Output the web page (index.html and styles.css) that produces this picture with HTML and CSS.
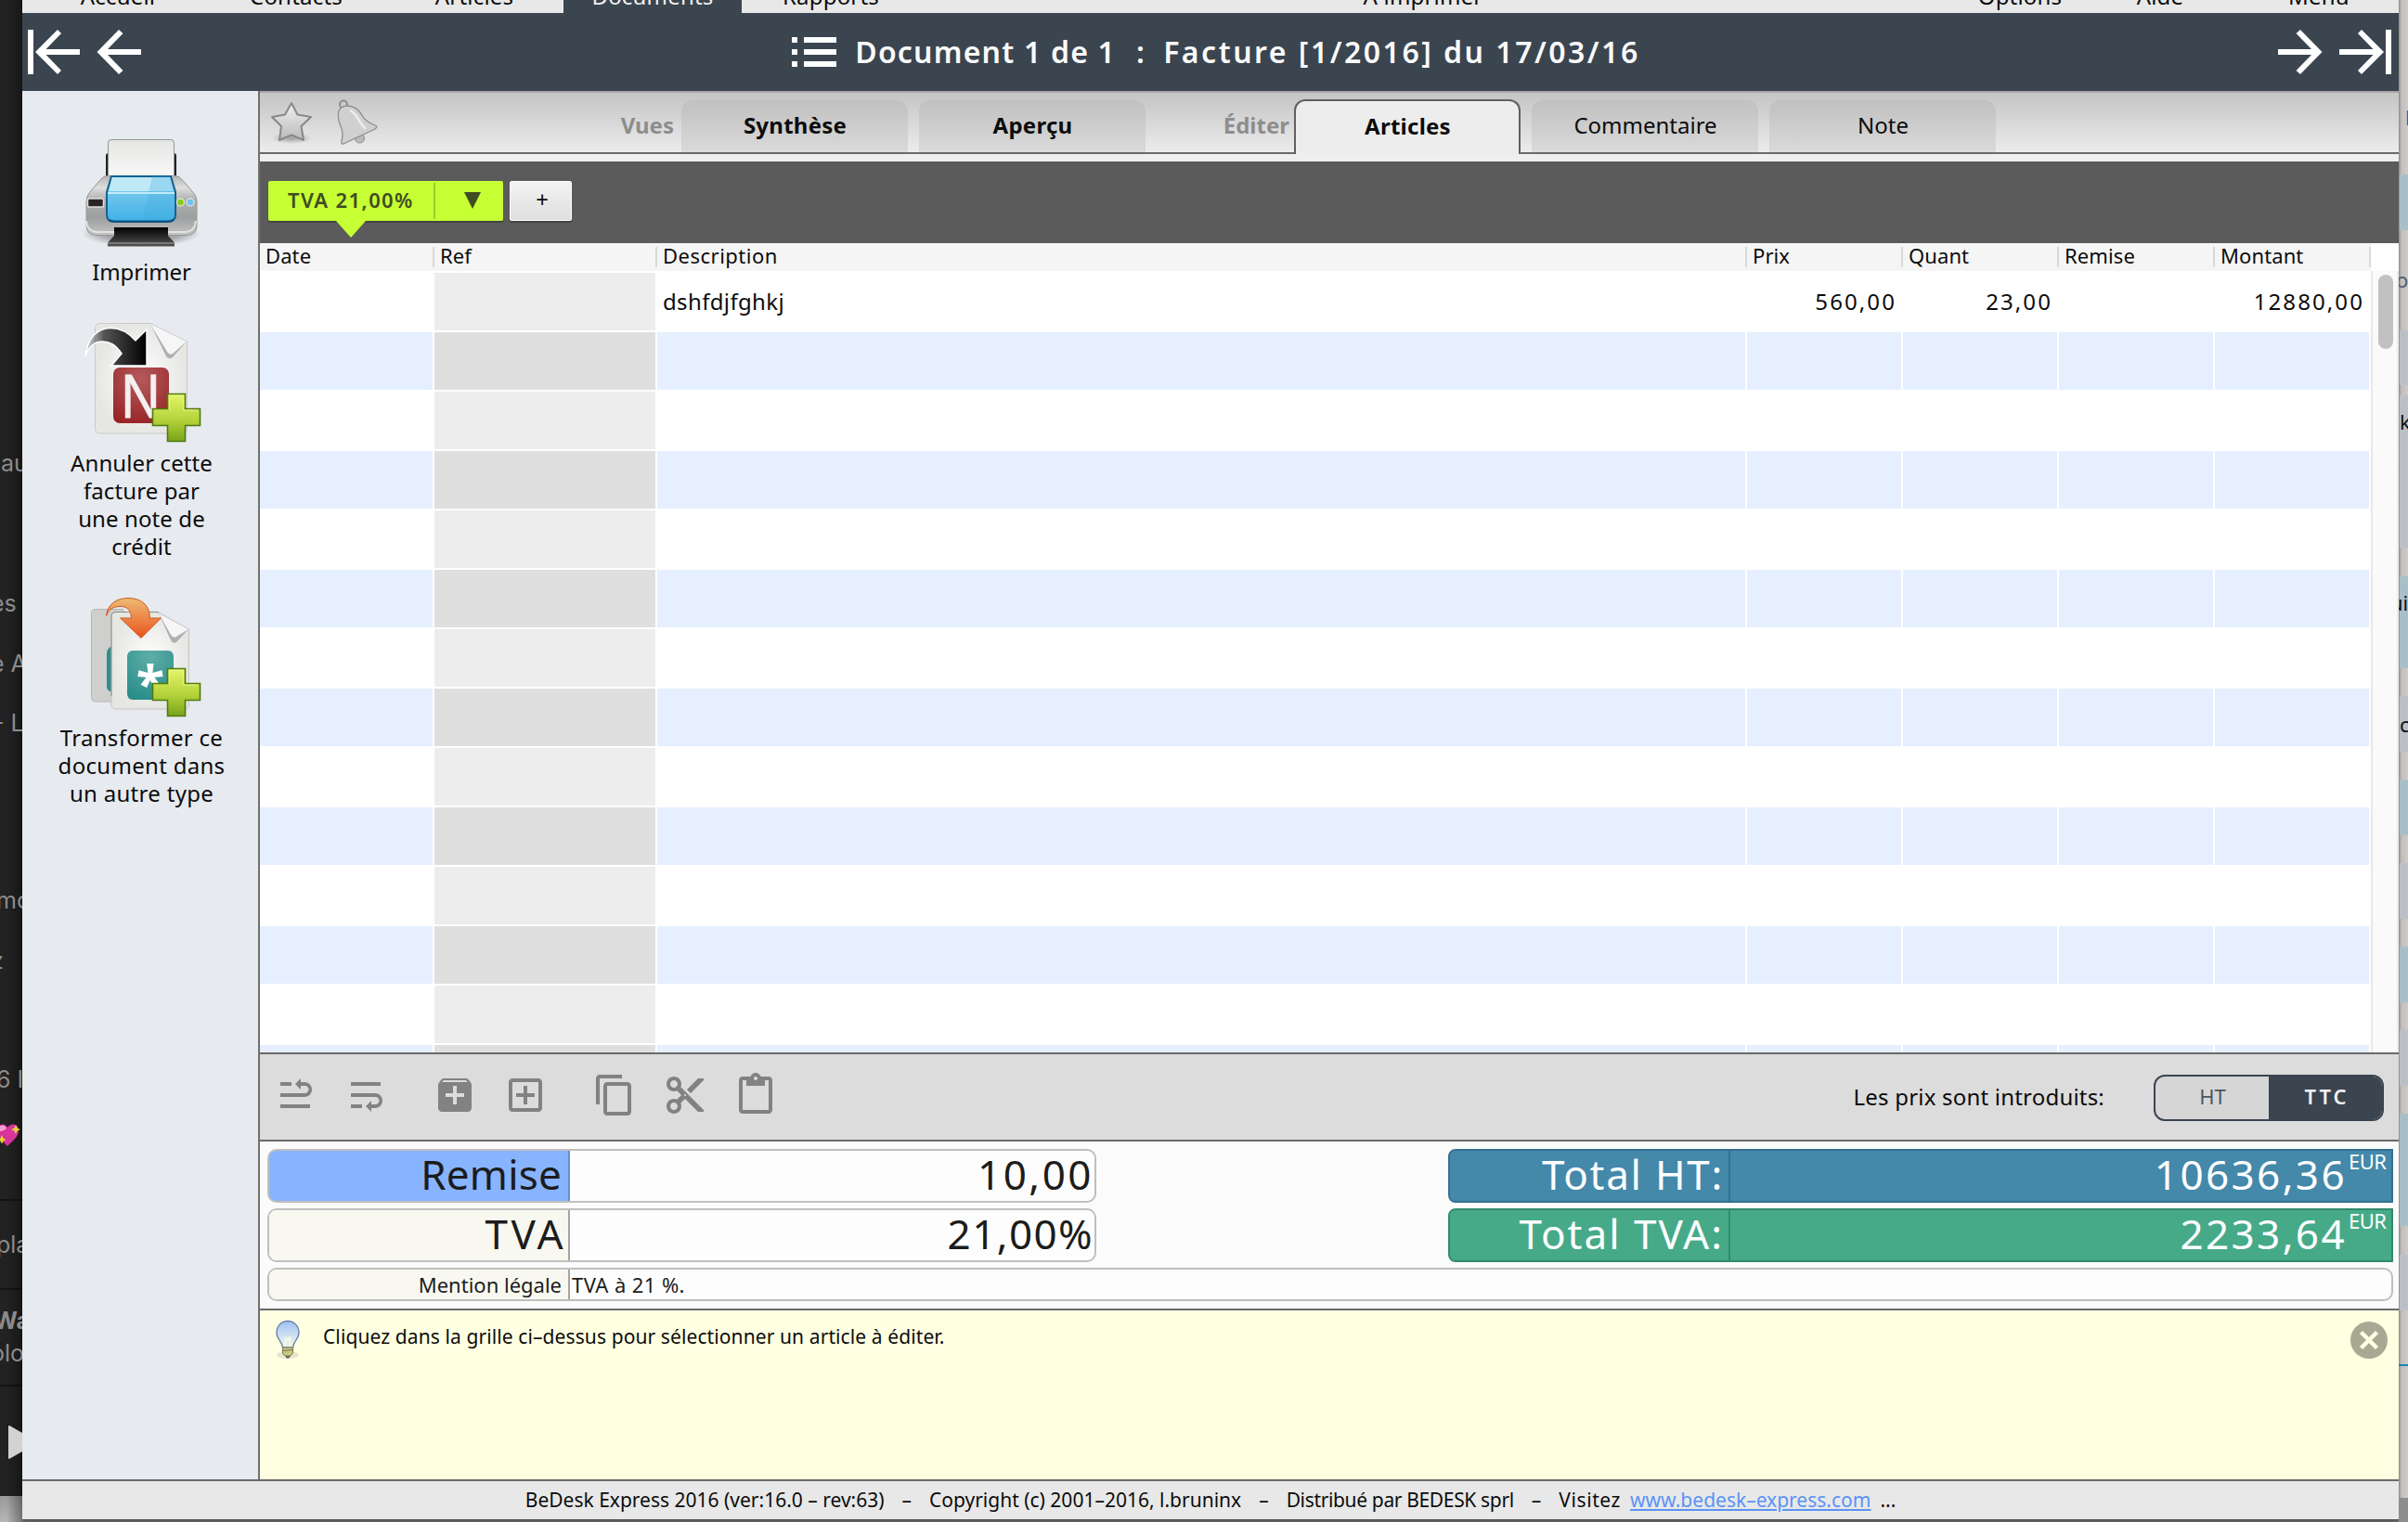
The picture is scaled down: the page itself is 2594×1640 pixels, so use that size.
FILE: index.html
```html
<!DOCTYPE html>
<html lang="fr">
<head>
<meta charset="utf-8">
<title>BeDesk Express 2016</title>
<link rel="stylesheet" href="styles.css">
</head>
<body>
<div class="desktop">
  <aside class="player">
    <span class="frag" style="top:482px">au</span>
    <span class="frag frag-in" style="top:633px">es</span>
    <span class="frag frag-in" style="top:698px">e A</span>
    <span class="frag frag-in2" style="top:762px">- L</span>
    <span class="frag frag-bold" style="top:953px">mo</span>
    <span class="frag frag-z" style="top:1018px">z</span>
    <span class="frag frag-bold" style="top:1146px">6 I</span>
    <svg class="heart" viewBox="0 0 24 28"><path d="M-4 8C-2 0 6 0 8 5C11 0 20 0 20 8C20 15 13 20 8 25C3 20-4 15-4 8Z" fill="#d6359a"/><path d="M-3 6C0 1 6 2 7 6C4 9 0 9-3 9Z" fill="#f2a0cf"/><path d="M17 2l1.500 3.500 3.500 1.500-3.500 1.500-1.500 3.500-1.500-3.500-3.500-1.500 3.500-1.500zM2 13l1.500 3.500 3 1.500-3 1.500-1.500 3-1.500-3-3-1.500 3-1.500z" fill="#e6d62c"/></svg>
    <span class="frag frag-bold" style="top:1324px">pla</span>
    <span class="frag frag-bold heavy" style="top:1406px">Wa</span>
    <span class="frag frag-in" style="top:1441px">olo</span>
    <svg class="play" viewBox="0 0 15 36"><path d="M1 0L15 8V28L1 36Q0 36 0 35V1Q0 0 1 0Z" fill="#d2d2d2"/></svg>
  </aside>

  <div class="window">
    <nav class="menu">
      <span class="item">Accueil</span>
      <span class="item">Contacts</span>
      <span class="item">Articles</span>
      <span class="item on">Documents</span>
      <span class="item">Rapports</span>
      <span class="item print">À imprimer</span>
      <span class="item options">Options</span>
      <span class="item help">Aide</span>
      <span class="item more">Menu</span>
    </nav>

    <header class="title">
      <svg class="nav" width="122" height="48" viewBox="0 0 122 48"><path d="M0 0h6v48H0zM8 24L32 0l4 4-16.500 17H56v6H19.500L36 44l-4 4zM74.500 24L98 0l4.500 4L86 21h36v6H86l16.500 17L98 48z"/></svg>
      <div class="heading">
        <svg width="48" height="32" viewBox="0 0 48 32"><path d="M0 0h6v6H0zM13 0h35v6H13zM0 13h6v6H0zM13 13h35v6H13zM0 26h6v6H0zM13 26h35v6H13z"/></svg>
        <h1><span>Document 1 de 1</span><span>:</span><span class="wide">Facture [1/2016] du 17/03/16</span></h1>
      </div>
      <svg class="nav next" width="122" height="48" viewBox="0 0 122 48"><path d="M122 0h-6v48h6zM114 24L90 0l-4 4 16.500 17H66v6h36.500L86 44l4 4zM47.500 24L24 0l-4.500 4L36 21H0v6h36L19.500 44 24 48z"/></svg>
    </header>

    <div class="body">
      <aside class="side">
        <div class="action printer">
          <svg width="140" height="132" viewBox="-3 0 140 132">
            <defs>
              <linearGradient id="pb" x1="0" y1="0" x2="0" y2="1"><stop offset="0" stop-color="#b4b4b4"/><stop offset=".2" stop-color="#dedede"/><stop offset=".4" stop-color="#b0b0b0"/><stop offset=".7" stop-color="#9d9fa0"/><stop offset="1" stop-color="#c4c4c4"/></linearGradient>
              <linearGradient id="pg" x1="0" y1="0" x2="0" y2="1"><stop offset="0" stop-color="#8fd3ef"/><stop offset="1" stop-color="#3fb0e6"/></linearGradient>
              <linearGradient id="pt" x1="0" y1="0" x2="0" y2="1"><stop offset="0" stop-color="#000"/><stop offset="1" stop-color="#555"/></linearGradient>
              <linearGradient id="pp" x1="0" y1="0" x2="0" y2="1"><stop offset="0" stop-color="#e4e4e2"/><stop offset="1" stop-color="#fafafa"/></linearGradient>
              <radialGradient id="ps"><stop offset=".6" stop-color="#000" stop-opacity=".3"/><stop offset="1" stop-color="#000" stop-opacity="0"/></radialGradient>
            </defs>
            <ellipse cx="68" cy="112" rx="64" ry="14" fill="url(#ps)"/>
            <path d="M30 50V28q0-3 3-3h70q3 0 3 3v22z" fill="#222"/>
            <path d="M32.500 52V14q0-3.500 3.500-3.500h64q3.500 0 3.500 3.500v38z" fill="url(#pp)" stroke="#949494"/>
            <path d="M31 49.500h74q4 0 8 5l12 14q3 4 3 8v26q0 11-11 11H20q-11 0-11-11V77q0-5 3-9l11-13q4-5.500 8-5.500z" fill="url(#pb)" stroke="#969696"/>
            <path d="M9 98q1 12 12 12h94q11 0 12-12" fill="none" stroke="#e2e2e2" stroke-width="2"/>
            <path d="M36 50h64l5 17v24q0 8-8 8H39q-8 0-8-8V67z" fill="url(#pg)" stroke="#14618f" stroke-width="2"/>
            <path d="M37 51h62l4 15H33z" fill="#bfe9f7"/>
            <path d="M80 50h19l5 17v25q0 3-4 4H70z" fill="#38a9e0" opacity=".28"/>
            <path d="M32 68h72" stroke="#c3ebf9" stroke-width="2"/>
            <path d="M34 97q2 1.500 6 1.500h56q4 0 7-2" fill="none" stroke="#0d5280" stroke-width="2"/>
            <rect x="10.500" y="74" width="17" height="9" rx="1.500" fill="#2c2424" stroke="#e0e0e0" stroke-width="1.500"/>
            <circle cx="110.500" cy="78" r="4" fill="#86cf12" stroke="#dcdcdc" stroke-width="1.500"/>
            <circle cx="121" cy="78" r="4" fill="#6cc4ee" stroke="#dcdcdc" stroke-width="1.500"/>
            <path d="M39 105h58v9l7 7.500v4H32v-4l7-7.500z" fill="url(#pt)"/>
            <path d="M32 122h72" stroke="#8a8a8a" stroke-width="1.500"/>
          </svg>
          <p>Imprimer</p>
        </div>
        <div class="action credit">
          <svg width="140" height="140" viewBox="81 340 140 140">
            <defs>
              <radialGradient id="paper"><stop offset="0" stop-color="#fff"/><stop offset="1" stop-color="#e6e6e3"/></radialGradient>
              <radialGradient id="red" cx=".5" cy=".2" r=".9"><stop offset="0" stop-color="#b45a5c"/><stop offset="1" stop-color="#962022"/></radialGradient>
              <linearGradient id="ink"><stop offset="0" stop-color="#777" stop-opacity=".2"/><stop offset=".3" stop-color="#555"/><stop offset="1" stop-color="#000"/></linearGradient>
              <linearGradient id="green" x1="0" y1="0" x2="0" y2="1"><stop offset="0" stop-color="#e4f56a"/><stop offset=".55" stop-color="#b5d33a"/><stop offset="1" stop-color="#79a31c"/></linearGradient>
            </defs>
            <path d="M108 348.500H162L201.500 368V462q0 5-5 5H108q-5.500 0-5.500-5.500V354q0-5.500 5.500-5.500z" fill="url(#paper)" stroke="#cacaca"/>
            <path d="M162 349L201 368 186 385q-4 3-7-1z" fill="#b0b0b0"/>
            <path d="M162 349L201 368 186 381q-3 2-6-2z" fill="#f6f6f6"/>
            <rect x="122" y="396" width="60" height="60" rx="7" fill="url(#red)"/>
            <text class="letter" transform="translate(130.500 449.500) scale(.88 1)">N</text>
            <path d="M92 384C94 364 105 353.500 119 353.500C131 353.500 139 359 146 367L158 355V394H120L131 381C124 371 118 368 110 368C102 368 95 374 92 384z" fill="url(#ink)" stroke="#fff" stroke-width="1.500"/>
            <path d="M180.500 424.500h19v16h16v18h-16v17h-19v-17h-16v-18h16z" fill="url(#green)" stroke="#4f7a0e" stroke-width="1.600"/>
            <path d="M182.500 442V426.500h15V442H213" fill="none" stroke="#eef79a" stroke-opacity=".7"/>
          </svg>
          <p>Annuler cette<br>facture par<br>une note de<br>crédit</p>
        </div>
        <div class="action convert">
          <svg width="140" height="140" viewBox="81 636 140 140">
            <defs>
              <radialGradient id="teal" cx=".5" cy=".1" r=".9"><stop offset="0" stop-color="#5fada8"/><stop offset="1" stop-color="#2a8e8a"/></radialGradient>
              <linearGradient id="orange" x1="0" y1="0" x2="0" y2="1"><stop offset="0" stop-color="#eebb74"/><stop offset="1" stop-color="#e9521c"/></linearGradient>
            </defs>
            <path d="M103 656.500h30v99.500h-30q-4.500 0-4.500-4.500v-91q0-4 4.500-4z" fill="#cfcfcd" stroke="#b5b5b5"/>
            <path d="M122 696q-7 2-7 8v36q0 5 7 6z" fill="#2c8f8b"/>
            <path d="M125 659.500H170L203.500 678V759q0 5-5 5H125q-5 0-5-5v-94q0-5.500 5-5.500z" fill="url(#paper)" stroke="#c2c2c2"/>
            <path d="M120 750v-86q0-4.500 5-4.500h46" fill="none" stroke="#8b8b8b"/>
            <path d="M171 661L203 678 191 691q-4 4-7-1z" fill="#b0b0b0"/>
            <path d="M171 661L203 678 190 686q-3 2-6-2z" fill="#f6f6f6"/>
            <rect x="137" y="701" width="50" height="53" rx="6" fill="url(#teal)"/>
            <text class="star" x="162" y="757" text-anchor="middle">*</text>
            <path transform="translate(0 -5.500)" d="M114.500 669C116 656 126 650 138 650C152 650 161 657 161.500 671.500H173.500L152 693 129.500 671.500H141.500C141 663 137 659 130 659C122 659 117 662 114.500 669z" fill="url(#orange)" stroke="#cc5a20"/>
            <path d="M180.500 720.500h19v16h16v18h-16v17h-19v-17h-16v-18h16z" fill="url(#green)" stroke="#4f7a0e" stroke-width="1.600"/>
            <path d="M182.500 738V722.500h15V738H213" fill="none" stroke="#eef79a" stroke-opacity=".7"/>
          </svg>
          <p>Transformer ce<br>document dans<br>un autre type</p>
        </div>
      </aside>

      <main class="main">
        <div class="tabs">
          <svg class="marks" width="130" height="64" viewBox="0 0 130 64">
            <defs>
              <linearGradient id="sg" x1="0" y1="0" x2="0" y2="1"><stop offset="0" stop-color="#f0f0f0"/><stop offset="1" stop-color="#bababa"/></linearGradient>
              <radialGradient id="ss"><stop offset="0" stop-color="#000" stop-opacity=".3"/><stop offset="1" stop-color="#000" stop-opacity="0"/></radialGradient>
            </defs>
            <ellipse cx="30" cy="49" rx="22" ry="6" fill="url(#ss)"/>
            <path d="M30 11L36.500 23.500 51 26 40.500 36 43 51 30 45.500 17 51 19 36 9 26 23 23.500z" fill="url(#sg)" stroke="#888" stroke-width="2" stroke-linejoin="round"/>
            <circle cx="103.500" cy="49" r="5" fill="#bbb" stroke="#8a8a8a"/>
            <circle cx="86" cy="12.500" r="4" fill="none" stroke="#8d8d8d" stroke-width="2"/>
            <path d="M83 16.500C88 12 98 14 103 20C108 27 109 31 121 35.500C123 37 120 39 118 40L88 54C85 56 83 55 84 52C87 43 83 37 81 30C79.500 23 80 19 83 16.500z" fill="#d0d0d0" stroke="#8d8d8d" stroke-width="1.300"/>
            <path d="M93 19C102 23 101 31 110 39" fill="none" stroke="#ececec" stroke-width="2.500"/>
          </svg>
          <span class="group views">Vues</span>
          <span class="tab strong">Synthèse</span>
          <span class="tab strong">Aperçu</span>
          <span class="group edit">Éditer</span>
          <span class="tab strong active">Articles</span>
          <span class="tab">Commentaire</span>
          <span class="tab">Note</span>
        </div>

        <div class="vatbar">
          <div class="vat"><span class="rate">TVA 21,00%</span><span class="drop"><i></i></span></div>
          <div class="add">+</div>
        </div>

        <div class="table">
          <div class="head cols">
            <span>Date</span><span>Ref</span><span>Description</span><span>Prix</span><span>Quant</span><span>Remise</span><span>Montant</span>
          </div>
          <div class="grid">
            <div class="rows">
              <div class="row cols"><i></i><i></i><span>dshfdjfghkj</span><b>560,00</b><b>23,00</b><i></i><b>12880,00</b></div>
              <div class="row cols"><i></i><i></i><i></i><i></i><i></i><i></i><i></i></div>
              <div class="row cols"><i></i><i></i><i></i><i></i><i></i><i></i><i></i></div>
              <div class="row cols"><i></i><i></i><i></i><i></i><i></i><i></i><i></i></div>
              <div class="row cols"><i></i><i></i><i></i><i></i><i></i><i></i><i></i></div>
              <div class="row cols"><i></i><i></i><i></i><i></i><i></i><i></i><i></i></div>
              <div class="row cols"><i></i><i></i><i></i><i></i><i></i><i></i><i></i></div>
              <div class="row cols"><i></i><i></i><i></i><i></i><i></i><i></i><i></i></div>
              <div class="row cols"><i></i><i></i><i></i><i></i><i></i><i></i><i></i></div>
              <div class="row cols"><i></i><i></i><i></i><i></i><i></i><i></i><i></i></div>
              <div class="row cols"><i></i><i></i><i></i><i></i><i></i><i></i><i></i></div>
              <div class="row cols"><i></i><i></i><i></i><i></i><i></i><i></i><i></i></div>
              <div class="row cols"><i></i><i></i><i></i><i></i><i></i><i></i><i></i></div>
              <div class="row cols"><i></i><i></i><i></i><i></i><i></i><i></i><i></i></div>
            </div>
            <div class="scroll"><div class="thumb"></div></div>
          </div>
        </div>

        <div class="tools">
          <svg viewBox="0 0 24 24"><path transform="matrix(1 0 0 -1 0 24)" d="M4 19h6v-2H4v2zM20 5H4v2h16V5zm-3 6H4v2h13.250c1.100 0 2 .9 2 2s-.9 2-2 2H15v-2l-3 3 3 3v-2h2c2.210 0 4-1.790 4-4s-1.790-4-4-4z"/></svg>
          <svg viewBox="0 0 24 24"><path d="M4 19h6v-2H4v2zM20 5H4v2h16V5zm-3 6H4v2h13.250c1.100 0 2 .9 2 2s-.9 2-2 2H15v-2l-3 3 3 3v-2h2c2.210 0 4-1.790 4-4s-1.790-4-4-4z"/></svg>
          <svg class="apart" viewBox="0 0 24 24"><path fill-rule="evenodd" d="M20.550 5.220l-1.390-1.680C18.880 3.210 18.470 3 18 3H6c-.47 0-.88.21-1.150.55L3.460 5.220C3.170 5.570 3 6.010 3 6.500V19c0 1.100.89 2 2 2h14c1.100 0 2-.9 2-2V6.500c0-.49-.17-.93-.45-1.280zM5.120 5l.82-1h12l.93 1zM11 7h2v4h4v2h-4v4h-2v-4H7v-2h4z"/></svg>
          <svg viewBox="0 0 24 24"><path d="M19 3H5c-1.110 0-2 .9-2 2v14c0 1.100.89 2 2 2h14c1.100 0 2-.9 2-2V5c0-1.100-.9-2-2-2zm0 16H5V5h14v14zm-8-2h2v-4h4v-2h-4V7h-2v4H7v2h4z"/></svg>
          <svg class="apart" viewBox="0 0 24 24"><path d="M16 1H4c-1.100 0-2 .9-2 2v14h2V3h12V1zm3 4H8c-1.100 0-2 .9-2 2v14c0 1.100.9 2 2 2h11c1.100 0 2-.9 2-2V7c0-1.100-.9-2-2-2zm0 16H8V7h11v14z"/></svg>
          <svg viewBox="0 0 24 24"><path d="M9.640 7.640c.23-.5.36-1.050.36-1.640 0-2.210-1.790-4-4-4S2 3.790 2 6s1.790 4 4 4c.59 0 1.140-.13 1.640-.36L10 12l-2.360 2.360C7.140 14.130 6.590 14 6 14c-2.210 0-4 1.790-4 4s1.790 4 4 4 4-1.790 4-4c0-.59-.13-1.140-.36-1.640L12 14l7 7h3v-1L9.640 7.640zM6 8c-1.100 0-2-.89-2-2s.9-2 2-2 2 .89 2 2-.9 2-2 2zm0 12c-1.100 0-2-.89-2-2s.9-2 2-2 2 .89 2 2-.9 2-2 2zm6-7.500c-.28 0-.5-.22-.5-.5s.22-.5.5-.5.5.22.5.5-.22.5-.5.5zM19 3l-6 6 2 2 7-7V3z"/></svg>
          <svg viewBox="0 0 24 24"><path d="M19 2h-4.180C14.400.84 13.300 0 12 0c-1.300 0-2.400.84-2.820 2H5c-1.100 0-2 .9-2 2v16c0 1.100.9 2 2 2h14c1.100 0 2-.9 2-2V4c0-1.100-.9-2-2-2zm-7 0c.55 0 1 .45 1 1s-.45 1-1 1-1-.45-1-1 .45-1 1-1zm7 18H5V4h2v3h10V4h2v16z"/></svg>
          <span class="label">Les prix sont introduits:</span>
          <div class="switch"><span>HT</span><span class="sel">TTC</span></div>
        </div>

        <div class="totals">
          <div class="line">
            <div class="field blue"><span class="name">Remise</span><span class="value">10,00</span></div>
            <div class="total ht"><span class="name">Total HT:</span><span class="value">10636,36</span><span class="cur">EUR</span></div>
          </div>
          <div class="line">
            <div class="field vatf"><span class="name">TVA</span><span class="value">21,00%</span></div>
            <div class="total tva"><span class="name">Total TVA:</span><span class="value">2233,64</span><span class="cur">EUR</span></div>
          </div>
          <div class="field legal"><span class="name">Mention légale</span><span class="value">TVA à 21 %.</span></div>
        </div>

        <div class="hint">
          <svg class="bulb" width="30" height="44" viewBox="0 0 30 44">
            <defs><linearGradient id="bg" x1="0" y1="0" x2="0" y2="1"><stop offset="0" stop-color="#9dc0f0"/><stop offset=".6" stop-color="#d4e4f4"/><stop offset="1" stop-color="#f4f4e4"/></linearGradient></defs>
            <ellipse cx="15" cy="38" rx="12" ry="4" fill="#000" opacity=".1"/>
            <path d="M15 1.500C22 1.500 27 7 27 14C27 21 21 23 20.500 30H9.500C9 23 3 21 3 14C3 7 8 1.500 15 1.500z" fill="url(#bg)" stroke="#6b83ae" stroke-width="1.400"/>
            <path d="M12 28L13 19 15 22 17 19 18 28" fill="none" stroke="#fffce0" stroke-width="1.300"/>
            <path d="M9.500 30h11v6l-2.500 3h-6l-2.500-3z" fill="#c9c583" stroke="#7d7a4c"/>
            <path d="M10 33.500l10-1" stroke="#77744a"/>
            <path d="M12.500 39h5l-1 2.500h-3z" fill="#666"/>
          </svg>
          <p>Cliquez dans la grille ci–dessus pour sélectionner un article à éditer.</p>
          <svg class="close" width="40" height="40" viewBox="0 0 40 40"><circle cx="20" cy="20" r="20" fill="#a9a893"/><path d="M11.500 11.500L28.500 28.500M28.500 11.500L11.500 28.500" stroke="#ffffe4" stroke-width="4.500"/></svg>
        </div>
      </main>
    </div>

    <footer class="foot">
      <span>BeDesk Express 2016 (ver:16.0 – rev:63)</span><span>–</span><span>Copyright (c) 2001–2016, l.bruninx</span><span>–</span><span class="by">Distribué par BEDESK sprl</span><span>–</span><span class="visit"><span class="go">Visitez</span><a>www.bedesk–express.com</a><span>...</span></span>
    </footer>
  </div>

  <aside class="behind">
    <i class="band blue" style="top:188px;height:60px"></i>
    <i class="band" style="top:356px;height:59px"></i>
    <i class="band" style="top:426px;height:165px"></i>
    <i class="band blue" style="top:621px;height:99px"></i>
    <i class="band" style="top:750px;height:60px"></i>
    <i class="band blue" style="top:840px;height:60px"></i>
    <i class="band" style="top:930px;height:60px"></i>
    <i class="band blue" style="top:1020px;height:60px"></i>
    <i class="band" style="top:1110px;height:60px"></i>
    <i class="band blue" style="top:1200px;height:121px"></i>
    <i class="band" style="top:1352px;height:60px"></i>
    <i class="rule" style="top:1470px"></i>
    <span class="word link" style="top:109px">l</span>
    <span class="word grey" style="top:284px">o</span>
    <span class="word" style="top:437px">k</span>
    <span class="word wide-in" style="top:632px">ui</span>
    <span class="word" style="top:763px">c</span>
  </aside>
</div>
</body>
</html>
```
FILE: styles.css
```css
* { box-sizing: border-box; }
body { margin: 0; font-family: "Noto Sans", "Open Sans", sans-serif; font-size: 24px; color: #0c0c0c; }
p, h1 { margin: 0; font-size: inherit; font-weight: inherit; }
i { font-style: normal; }
b { font-weight: 400; }
svg { display: block; flex: none; }

.desktop { display: grid; grid-template-columns: 24px 2560px 10px; height: 1640px; overflow: hidden; background: #777; }

/* music player showing at the left edge */
.player { position: relative; overflow: hidden; font-family: Inter, Lato, sans-serif; color: #8b8b8b;
  background:
    linear-gradient(90deg, transparent 30%, rgba(0,0,0,.35)),
    linear-gradient(#141414, #141414) 0 1292px / 100% 2px no-repeat,
    linear-gradient(#141414, #141414) 0 1388px / 100% 2px no-repeat,
    linear-gradient(#141414, #141414) 0 1492px / 100% 2px no-repeat,
    linear-gradient(#222 1612px, #9a9a9a 1612px, #b5b5b5); }
.frag { position: absolute; left: 1px; line-height: 34px; font-size: 25px; white-space: nowrap; }
.frag-in { left: -10px; }
.frag-in2 { left: -7px; }
.frag-z { left: -10px; }
.frag-bold { left: -4px; }
.heavy { left: -7px; font-weight: 700; }
.heart { position: absolute; left: 0; top: 1210px; width: 24px; height: 28px; }
.play { position: absolute; left: 9px; top: 1536px; width: 15px; height: 36px; }

/* list window showing at the right edge */
.behind { position: relative; overflow: hidden; background: linear-gradient(90deg, #8e8b8a, #c2bfbe 3px, #cdcac8) 0 0 / 100% 1614px no-repeat, #8d8d8d; }
.band { position: absolute; left: 1px; right: 0; background: #bcbfc6; }
.band.blue { background: #a9bfc7; }
.rule { position: absolute; left: 0; right: 0; height: 2px; background: #1d83b3; }
.word { position: absolute; left: 1px; line-height: 34px; font-size: 22px; color: #111; white-space: nowrap; }
.word.link { left: 7px; color: #2b5f99; }
.word.grey { left: -3px; color: #4d5d70; }
.word.wide-in { left: -9px; }

.window { display: flex; flex-direction: column; height: 1638px; background: #e8e8e8; border-bottom: 1px solid #555; box-shadow: 0 0 8px rgba(0,0,0,.5); }

.menu { display: flex; align-items: flex-end; height: 14px; padding-left: 7px; overflow: hidden; background: #e8e8e8; letter-spacing: .2px; }
.menu .item { flex: none; width: 192px; line-height: 37px; text-align: center; }
.menu .on { background: #3b4550; color: #f0f0f0; }
.menu .print { width: 1084px; }
.menu .options { width: 150px; margin-left: 26px; }
.menu .help { width: 162px; padding-right: 10px; }
.menu .more { width: 170px; }

.title { display: grid; grid-template-columns: 1fr auto 1fr; align-items: center; height: 84px; padding: 0 8px 0 6px; background: #3b4550; color: #fafafa; fill: #fff; }
.title .next { justify-self: end; }
.heading { display: flex; align-items: center; gap: 20px; margin-left: 14px; }
.heading h1 { display: flex; gap: 22px; font-size: 32px; font-weight: 600; line-height: 40px; letter-spacing: 1.2px; margin-top: -1px; white-space: nowrap; }
.heading .wide { letter-spacing: 2.5px; margin-left: -3px; }

.body { display: flex; height: 1496px; }
.side { width: 256px; padding-top: 42px; background: #e7eaef; border-right: 2px solid #707070; }
.action { display: flex; flex-direction: column; align-items: center; line-height: 30px; text-align: center; letter-spacing: .1px; }
.action p { padding-left: 3px; }
.printer p { margin-top: 6px; letter-spacing: -.1px; }
.credit, .convert { margin-top: 32px; }
.credit p, .convert p { margin-top: 4px; }
.convert p { letter-spacing: .3px; }
.letter { font: 66px "Liberation Sans", Arial, sans-serif; fill: #f4f0f0; stroke: #f4f0f0; stroke-width: 1px; }
.star { font: 700 56px "Noto Sans", sans-serif; fill: #fff; }

.main { display: flex; flex-direction: column; width: 2304px; }

.tabs { display: flex; align-items: flex-end; height: 68px; padding-left: 4px; border-top: 2px solid #a8a6a6; border-bottom: 2px solid #6a6a6a; background: linear-gradient(#c8c8c8 10%, #ececec); line-height: 54px; }
.marks { align-self: flex-start; }
.tab { flex: none; width: 244px; height: 56px; margin-right: 12px; padding-left: 1px; border-radius: 12px 12px 0 0; background: linear-gradient(#c0c0c0, #dadada); text-align: center; }
.strong { font-weight: 700; letter-spacing: .25px; }
.group { height: 56px; color: #8d8d8d; text-align: right; font-weight: 700; }
.views { width: 320px; padding-right: 8px; }
.edit { width: 160px; margin-left: -12px; padding-right: 5px; }
.tab.active { height: 59px; margin-bottom: -2px; border: 2px solid #606060; border-bottom: 0; background: #ededed; }

.vatbar { display: flex; align-items: flex-start; height: 96px; padding: 21px 9px 0; border-top: 8px solid #efefef; background: #5b5b5b; }
.vat { position: relative; display: flex; width: 253px; height: 43px; border-radius: 2px; background: #c6ff33; color: #3f4d22; box-shadow: 0 2px 1px #444; font-size: 22px; font-weight: 600; line-height: 41px; }
.vat::after { content: ""; position: absolute; left: 73px; top: 43px; border: 16px solid transparent; border-top: 18px solid #c6ff33; border-bottom: 0; }
.rate { width: 180px; margin: 2px 0; padding-left: 21px; border-right: 2px solid #9ecb2b; letter-spacing: 1.4px; line-height: 37px; white-space: nowrap; }
.drop { padding: 12px 0 0 31px; }
.drop i { display: block; border: 9px solid transparent; border-top: 18px solid #3f4d22; border-bottom: 0; }
.add { width: 67px; height: 43px; margin-left: 7px; padding-left: 3px; border: 1px solid #fff; border-radius: 2px; background: linear-gradient(#f3f3f3, #dedede); box-shadow: 0 2px 1px #444; line-height: 38px; text-align: center; }

.cols { display: grid; grid-template-columns: 186px 238px 1172px 166px 166px 166px 166px; column-gap: 2px; }
.table { height: 872px; background: #fff; }
.head { width: 2274px; height: 30px; background: #f5f5f5; font-size: 22px; line-height: 27px; letter-spacing: .1px; }
.head span { height: 22px; margin: 4px -2px 0 0; padding-left: 6px; border-right: 2px solid #d9d9d9; line-height: 19px; }
.head span:nth-child(3) { letter-spacing: .5px; }
.grid { display: flex; height: 842px; overflow: hidden; }
.rows { display: grid; grid-auto-rows: 62px; row-gap: 2px; width: 2274px; padding-top: 2px; line-height: 62px; }
.row > * { height: 62px; }
.row span { padding-left: 6px; letter-spacing: .35px; }
.row b { padding-right: 5px; text-align: right; letter-spacing: 2.1px; }
.row > :nth-child(2) { background: #ededed; }
.row:nth-child(even) > * { background: #e5efff; }
.row:nth-child(even) > :nth-child(2) { background: #dfdfdf; }
.scroll { width: 30px; padding: 4px 4px 0 6px; border-left: 2px solid #e8e8e8; border-right: 2px solid #ececec; background: #fafafa; }
.thumb { width: 16px; height: 80px; border-radius: 8px; background: #c1c1c1; }

.tools { display: flex; height: 94px; padding: 20px 16px 0 14px; border-top: 2px solid #6a6a6a; background: #dcdcdc; }
.tools svg { width: 48px; height: 48px; margin-right: 28px; fill: #828282; }
.tools .apart { margin-left: 20px; }
.tools .label { margin: 9px 53px 0 auto; line-height: 34px; letter-spacing: .2px; }
.switch { display: flex; width: 248px; height: 50px; margin-top: 2px; border: 2px solid #3b4550; border-radius: 12px; background: #d6d6d6; overflow: hidden; font-size: 22px; line-height: 43px; color: #4a5663; text-align: center; }
.switch span { width: 123px; padding-left: 1px; }
.switch .sel { width: 123px; padding-left: 3px; background: #3b4550; color: #f0f0f0; font-weight: 600; letter-spacing: 2.9px; }

.totals { display: flex; flex-direction: column; gap: 6px; height: 182px; padding: 8px 6px 0 8px; border-top: 2px solid #6a6a6a; background: #fbfbfb; color: #1c1c1c; font-size: 44px; }
.line { display: flex; justify-content: space-between; }
.field, .total { display: flex; height: 58px; border: 2px solid #bfbfbf; border-radius: 10px; overflow: hidden; background: #fdfdfd; line-height: 50px; white-space: nowrap; }
.field { width: 893px; }
.field .name { width: 324px; padding-right: 8px; border-right: 2px solid #a5a5a2; background: #f8f8f0; text-align: right; }
.field .value { flex: 1; padding-right: 1px; text-align: right; letter-spacing: 2.5px; }
.field.blue .name { width: 326px; margin: -2px 0 -2px -2px; padding-right: 7px; border: 2px solid #6a8fd0; border-radius: 10px 0 0 10px; background: #88b4ff; letter-spacing: .2px; }
.vatf .name { letter-spacing: 3.4px; padding-right: 2px; }
.vatf .value { letter-spacing: 1.4px; }
.legal { width: auto; height: 36px; font-size: 22px; line-height: 32px; }
.legal .value { padding-left: 2px; text-align: left; letter-spacing: .4px; }
.legal .name { padding-right: 7px; }
.total { width: 1018px; color: #fff; border-radius: 8px 0 0 8px; letter-spacing: 1.75px; }
.total .name { width: 302px; padding-right: 5px; border-right: 2px solid; text-align: right; }
.tva .name { letter-spacing: 2px; }
.total .value { flex: 1; padding-right: 2px; text-align: right; letter-spacing: 2.4px; }
.cur { width: 46px; font-size: 22px; line-height: 23px; letter-spacing: -.5px; }
.ht, .ht .name { background: #4488aa; border-color: #34708f; }
.tva, .tva .name { background: #46aa88; border-color: #328a6b; }

.hint { display: flex; align-items: flex-start; height: 184px; padding: 10px 12px 0 15px; border-top: 2px solid #6a6a6a; background: #ffffe1; font-size: 21px; }
.hint p { flex: 1; margin: 1px 0 0 23px; line-height: 34px; letter-spacing: .1px; }
.hint .close { margin-top: 2px; }

.foot { display: flex; justify-content: center; gap: 19px; height: 43px; border-top: 2px solid #6a6a6a; font-size: 21px; line-height: 40px; white-space: nowrap; }
.visit { display: flex; gap: 10px; }
.by { letter-spacing: -.35px; }
.go { letter-spacing: .6px; }
.foot a { color: #5b93f7; text-decoration: underline; }
```
